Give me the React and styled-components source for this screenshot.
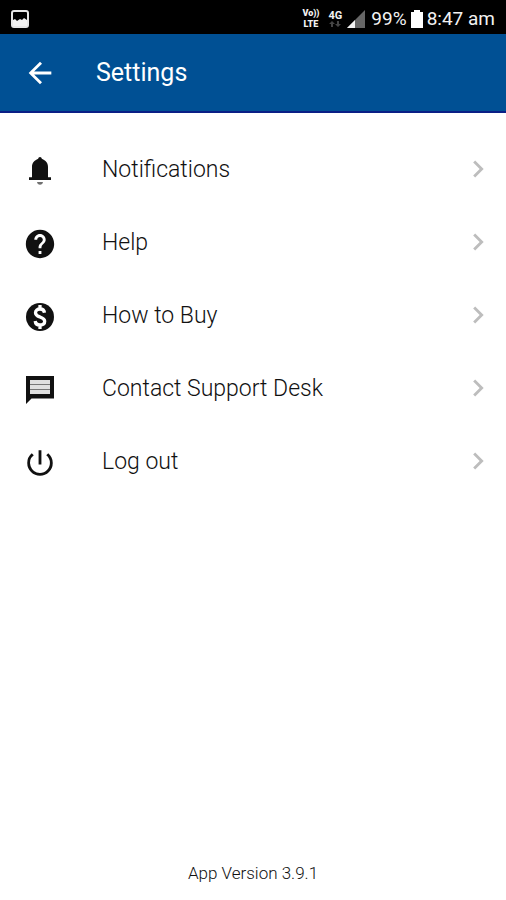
import React from 'react';
import styled, { createGlobalStyle } from 'styled-components';
import {
  MdArrowBack,
  MdChevronRight,
  MdHelp,
  MdPowerSettingsNew
} from 'react-icons/md';

const GlobalStyle = createGlobalStyle`
  body {
    margin: 0;
    background: #fff;
    font-family: Roboto, sans-serif;
    color: #111;
  }
`;

const Page = styled.div`
  display: flex;
  flex-direction: column;
  min-height: 100vh;
`;

const StatusBar = styled.div`
  display: flex;
  align-items: center;
  justify-content: space-between;
  height: 34px;
  padding: 3px 11px 0 11px;
  box-sizing: border-box;
  background: #000;
  color: #f2f2f2;
  font-size: 19px;
`;

const StatusGroup = styled.div`
  display: flex;
  align-items: center;
`;

const Volte = styled.div`
  display: flex;
  flex-direction: column;
  align-items: center;
  margin-right: 9px;
  font-size: 9px;
  font-weight: 900;
  line-height: 11px;
`;

const Network = styled.div`
  display: flex;
  flex-direction: column;
  align-items: center;
  margin-right: 5px;
  font-size: 11px;
  font-weight: 700;
  line-height: 11px;
`;

const Signal = styled.svg`
  margin-right: 6px;
`;

const Battery = styled.svg`
  margin: 0 4px;
`;

const Header = styled.header`
  display: flex;
  align-items: center;
  height: 79px;
  padding: 0 23px;
  box-sizing: border-box;
  border-bottom: 2px solid #0a1f86;
  background: #005094;
  color: #fff;
`;

const BackButton = styled.button`
  display: flex;
  margin-right: 39px;
  padding: 0;
  border: 0;
  background: none;
  color: inherit;
  font-size: 34px;
`;

const Title = styled.h1`
  margin: 0;
  font-size: 25px;
  font-weight: 400;
`;

const Menu = styled.ul`
  flex: 1;
  margin: 0;
  padding: 19px 0 0;
  list-style: none;
`;

const MenuLink = styled.a`
  display: flex;
  align-items: center;
  height: 73px;
  padding: 0 11px 0 23px;
  color: inherit;
  font-size: 23px;
  font-weight: 300;
  text-decoration: none;
`;

const MenuIcon = styled.span`
  display: flex;
  margin-right: 45px;
  padding-top: 4px;
  font-size: 34px;
`;

const MenuLabel = styled.span`
  flex: 1;
  padding-top: 2px;
`;

const Arrow = styled(MdChevronRight)`
  color: #bdbdbd;
  font-size: 34px;
`;

const Footer = styled.footer`
  padding-bottom: 17px;
  font-size: 17px;
  font-weight: 300;
  line-height: 20px;
  text-align: center;
`;

const BellIcon = () => (
  <svg width="1em" height="1em" viewBox="0 0 34 34" fill="currentColor">
    <path d="M17 3c1 0 1.600.8 1.800 1.800C22.800 6.500 25 9 25 13v10.300h3V26H6v-2.700h3V13c0-4 2.200-6.500 6.200-8.200C15.400 3.800 16 3 17 3z" />
    <path d="M14 28h6c-.3 1.800-1.400 2.800-3 2.800s-2.700-1-3-2.800z" fillOpacity="0.6" />
  </svg>
);

const DollarIcon = () => (
  <svg width="1em" height="1em" viewBox="0 0 34 34" fill="none">
    <circle cx="17" cy="17" r="14" fill="currentColor" />
    <path
      d="M21.5 12.8C21.2 10.3 19.4 9 17 9c-2.600 0-4.500 1.400-4.500 3.700 0 2.700 2.400 3.500 4.500 4.300 2.500.9 4.700 1.700 4.700 4.300 0 2.400-2 3.700-4.700 3.700s-4.600-1.500-4.800-4M17 5V9M17 25v4"
      stroke="#fff"
      strokeWidth="3.3"
    />
  </svg>
);

const MessageIcon = () => (
  <svg width="1em" height="1em" viewBox="0 0 34 34">
    <path d="M3 3h28v22.5H8.5L3 31z" fill="currentColor" />
    <path d="M7 7h20v14H7z" fill="#e0e0e0" />
    <path d="M7 11.5h20M7 16.5h20" stroke="#777" strokeWidth="1" />
  </svg>
);

const items = [
  { label: 'Notifications', icon: BellIcon },
  { label: 'Help', icon: MdHelp },
  { label: 'How to Buy', icon: DollarIcon },
  { label: 'Contact Support Desk', icon: MessageIcon },
  { label: 'Log out', icon: MdPowerSettingsNew }
];

const MenuItem = ({ label, icon: Icon }) => (
  <li>
    <MenuLink href="#">
      <MenuIcon><Icon /></MenuIcon>
      <MenuLabel>{label}</MenuLabel>
      <Arrow />
    </MenuLink>
  </li>
);

// Phone status bar with the signal and battery drawings
const Status = () => (
  <StatusBar>
    <svg width="18" height="18" viewBox="0 0 18 18">
      <rect x="1" y="1" width="16" height="16" rx="2" fill="none" stroke="#e6e6e6" strokeWidth="2" />
      <path d="M2 10l2-1 2 2 3-2 2 1 2-2 3 2v6H2z" fill="#f2f2f2" />
    </svg>
    <StatusGroup>
      <Volte>
        <span>Vo))</span>
        <span>LTE</span>
      </Volte>
      <Network>
        <span>4G</span>
        <svg width="12" height="7" viewBox="0 0 12 7" fill="#444">
          <path d="M3 0l3 3H4v3H2V3H0zM9 6L6 3h2V0h2v3h2z" />
        </svg>
      </Network>
      <Signal width="18" height="18" viewBox="0 0 18 18">
        <path d="M18 0v18H0z" fill="#666" />
        <path d="M8 10v8H0z" fill="#f2f2f2" />
      </Signal>
      <span>99%</span>
      <Battery width="12" height="18" viewBox="0 0 12 18">
        <path d="M3 0h6v2h3v16H0V2h3z" fill="#fff" />
      </Battery>
      <span>8:47 am</span>
    </StatusGroup>
  </StatusBar>
);

const App = () => (
  <Page>
    <GlobalStyle />
    <Status />
    <Header>
      <BackButton aria-label="Back"><MdArrowBack /></BackButton>
      <Title>Settings</Title>
    </Header>
    <Menu>
      {items.map(item => <MenuItem key={item.label} {...item} />)}
    </Menu>
    <Footer>App Version 3.9.1</Footer>
  </Page>
);

export default App;
